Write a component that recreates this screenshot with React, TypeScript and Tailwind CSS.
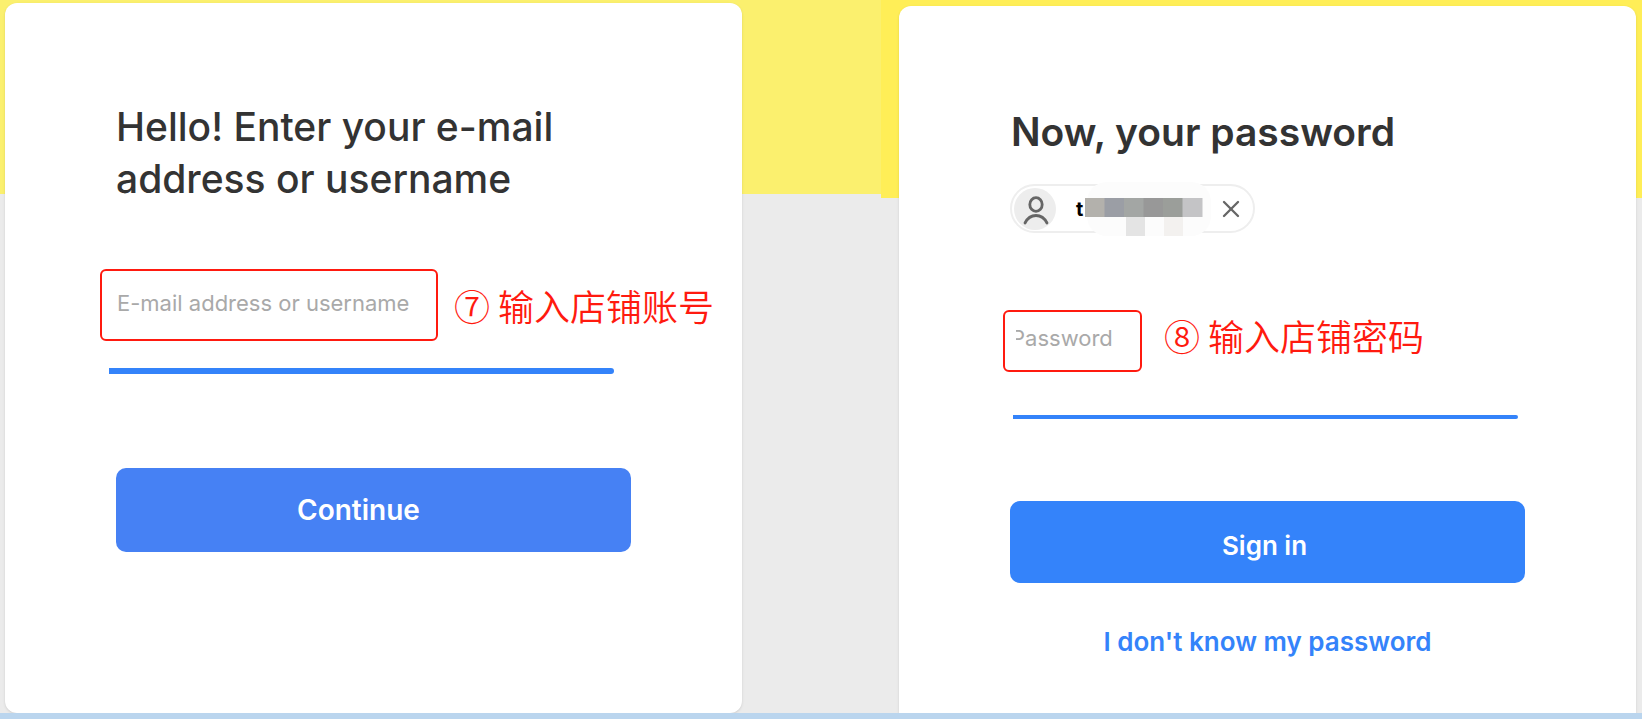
import { X } from 'lucide-react';

interface FieldProps {
  id: string;
  type: string;
  label: string;
  note: string;
  boxClass: string;
  noteClass: string;
}

function Field({ id, type, label, note, boxClass, noteClass }: FieldProps) {
  return (
    <div className="flex items-center">
      <input
        id={id}
        type={type}
        placeholder={label}
        aria-label={label}
        className={`border-2 border-[#ff1a0f] rounded-md bg-white text-[22px] text-gray-800 placeholder:text-[#a9a9a9] outline-none ${boxClass}`}
      />
      <label
        htmlFor={id}
        className={`whitespace-nowrap text-[36px] leading-[48px] text-[#ff1a0f] font-['Noto_Sans_CJK_SC',sans-serif] font-[350] ${noteClass}`}
      >
        {note}
      </label>
    </div>
  );
}

function UserIcon() {
  return (
    <svg viewBox="0 0 42 42" className="w-[42px] h-[42px] shrink-0" fill="none" stroke="#666" strokeWidth="2.8" strokeLinecap="round">
      <circle cx="21" cy="21" r="21" fill="#ededed" stroke="none" />
      <ellipse cx="22" cy="16.500" rx="6.2" ry="6.8" />
      <path d="M11 35c2.500-5 6.500-7.500 11-7.500s8.500 2.500 11 7.500" />
    </svg>
  );
}

function MaskedName() {
  const blocks = ['#b3b1ac', '#9b9ea5', '#a3a6a4', '#989898', '#9b9e9a', '#c4c4c6'];

  return (
    <svg viewBox="0 0 130 54" className="absolute left-[73px] -top-1 w-[130px] h-[54px]">
      <rect x="2" width="124" height="54" rx="20" fill="#fcfcfc" />
      {blocks.map((color, index) => (
        <rect key={index} x={index * 19.500} y="16" width="20" height="19" fill={color} />
      ))}
      <rect x="41" y="35" width="19" height="19" fill="#e4e4e4" />
      <rect x="79" y="35" width="19" height="19" fill="#f3f1ef" />
    </svg>
  );
}

function AccountStep() {
  return (
    <section className="flex bg-[linear-gradient(#fbf06e_194px,#ebebeb_194px)] pt-[3px] pl-[5px] pr-[139px]">
      <form className="flex-1 bg-white rounded-xl shadow-sm pt-[98px] pl-[95px] pr-[20px]">
        <h1 className="pl-4 text-[39px] leading-[52px] font-medium text-[#333]">
          Hello! Enter your e-mail
          <br />
          address or username
        </h1>
        <div className="mt-16">
          <Field
            id="account"
            type="text"
            label="E-mail address or username"
            note="⑦ 输入店铺账号"
            boxClass="w-[338px] h-[72px] pl-[15px] pb-1"
            noteClass="ml-4"
          />
        </div>
        <div className="mt-[27px] ml-[9px] w-[505px] h-[6px] rounded-r-full bg-[#3483fa]" />
        <button
          type="button"
          className="mt-[94px] ml-4 w-[515px] h-[84px] pr-[30px] rounded-[10px] bg-[#4681f4] text-white text-[28px] font-semibold"
        >
          Continue
        </button>
      </form>
    </section>
  );
}

function PasswordStep() {
  return (
    <section className="flex bg-[linear-gradient(#ffee57_198px,#ebebeb_198px)] pt-[6px] pl-[18px] pr-[6px]">
      <form className="flex-1 bg-white rounded-t-xl shadow-sm pt-[100px] pl-[104px] pr-[20px]">
        <h2 className="pl-2 text-[39px] leading-[52px] font-semibold text-[#333]">
          Now, your password
        </h2>
        <div className="relative mt-[26px] ml-[7px] flex w-[245px] h-[49px] items-center rounded-full border-2 border-[#eee] pl-0.5 pr-2">
          <UserIcon />
          <span className="ml-5 text-[20px] font-bold text-black">t</span>
          <MaskedName />
          <button type="button" aria-label="Remove account" className="ml-auto">
            <X className="w-7 h-7 text-[#666]" strokeWidth={2} />
          </button>
        </div>
        <div className="mt-[77px]">
          <Field
            id="password"
            type="password"
            label="Password"
            note="⑧ 输入店铺密码"
            boxClass="w-[139px] h-[62px] pl-[11px] -indent-[5px] pb-1.5"
            noteClass="ml-[22px] pb-3"
          />
        </div>
        <div className="mt-[43px] ml-[10px] w-[505px] h-[4px] rounded-r-full bg-[#3483fa]" />
        <button
          type="button"
          className="block mt-[82px] ml-[7px] w-[515px] h-[82px] pt-1.5 pr-1.5 rounded-[10px] bg-[#3483fa] text-white text-[26px] font-semibold"
        >
          Sign in
        </button>
        <div className="mt-[39px] ml-[7px] w-[515px] text-center">
          <a href="#" className="text-[26px] leading-[40px] font-semibold text-[#3483fa]">
            I don't know my password
          </a>
        </div>
      </form>
    </section>
  );
}

export default function App() {
  return (
    <div className="flex min-h-screen flex-col bg-[#bad5ee] font-['Inter',sans-serif]">
      <main className="grid flex-1 grid-cols-[881fr_761fr]">
        <AccountStep />
        <PasswordStep />
      </main>
      <div className="h-1.5 bg-[#bad5ee]" />
    </div>
  );
}
